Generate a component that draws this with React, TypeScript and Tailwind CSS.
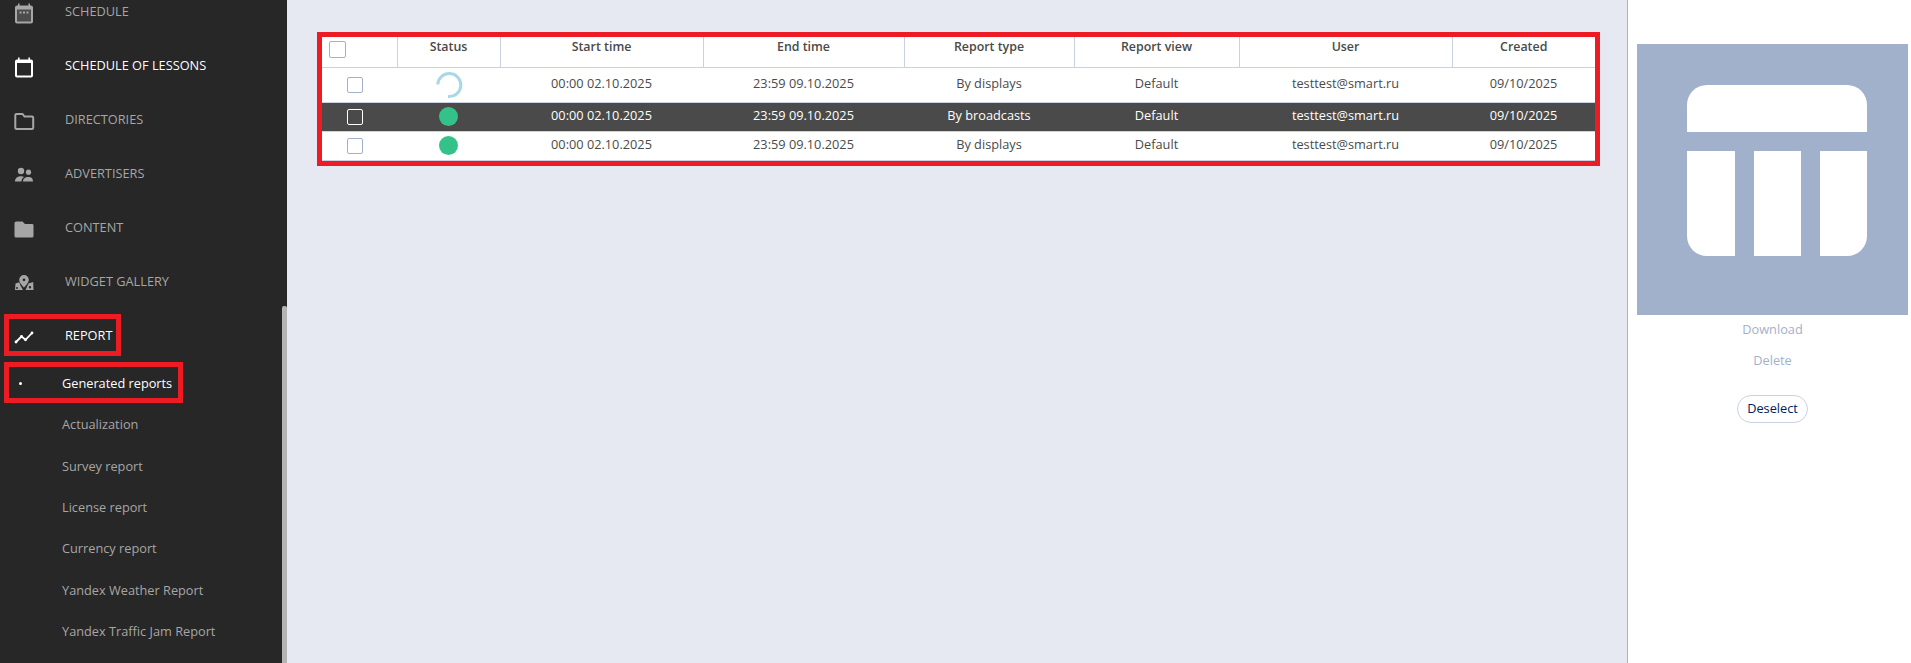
import React from "react";

const font = { fontFamily: '"Open Sans", sans-serif' };

const CalendarDots = () => (
  <svg width="24" height="24" viewBox="0 0 24 24" className="text-[#a6a6a6]">
    <rect x="4" y="8" width="16" height="13.500" fill="#4c4c4c" />
    <path fill="currentColor" fillRule="evenodd" d="M6 2.500h1.600v2h8.800v-2H18v2h1A2 2 0 0 1 21 6.500v14a2 2 0 0 1-2 2H5a2 2 0 0 1-2-2v-14a2 2 0 0 1 2-2h1zM5 8.500v12h14v-12z" />
    <rect x="7.500" y="10.500" width="2" height="2" fill="currentColor" />
    <rect x="11" y="10.500" width="2" height="2" fill="currentColor" />
    <rect x="14.500" y="10.500" width="2" height="2" fill="currentColor" />
  </svg>
);
const CalendarOutline = () => (
  <svg width="24" height="24" viewBox="0 0 24 24" className="text-white">
    <path fill="currentColor" fillRule="evenodd" d="M6 2.500h1.600v2h8.800v-2H18v2h1A2 2 0 0 1 21 6.500v14a2 2 0 0 1-2 2H5a2 2 0 0 1-2-2v-14a2 2 0 0 1 2-2h1zM5 8v12.500h14V8z" />
  </svg>
);
const FolderOutline = () => (
  <svg width="24" height="24" viewBox="0 0 24 24" className="text-[#a6a6a6]">
    <path fill="none" stroke="currentColor" strokeWidth="2" d="M4.500 5h6l2 2.500h7.500a1.200 1.200 0 0 1 1.200 1.200v10.100a1.200 1.200 0 0 1-1.200 1.200H4.500a1.200 1.200 0 0 1-1.200-1.200V6.200A1.200 1.200 0 0 1 4.500 5z" />
  </svg>
);
const People = () => (
  <svg width="24" height="24" viewBox="0 0 24 24" className="text-[#a6a6a6]">
    <circle cx="9" cy="8" r="3.200" fill="currentColor" />
    <circle cx="16.500" cy="9.200" r="2.600" fill="currentColor" />
    <path fill="currentColor" d="M3 18.500c0-3.400 2.800-5.200 6-5.200 1.200 0 2.200.2 3.100.7-1.700 1-2.600 2.500-2.600 4.500z" />
    <path fill="currentColor" d="M11 18.500c0-3 2.600-4.400 5.500-4.400S21 15.500 21 18.500z" />
  </svg>
);
const FolderFilled = () => (
  <svg width="24" height="24" viewBox="0 0 24 24" className="text-[#a6a6a6]">
    <path fill="currentColor" d="M4 4.500h6.500l2.500 2.500h7.500A1.500 1.500 0 0 1 21.500 8.500v10.500a1.500 1.500 0 0 1-1.500 1.500H4A1.500 1.500 0 0 1 2.500 19V6A1.500 1.500 0 0 1 4 4.500z" />
  </svg>
);
const MapPin = () => (
  <svg width="24" height="24" viewBox="0 0 24 24" className="text-[#a6a6a6]">
    <path fill="currentColor" fillRule="evenodd" d="M3.500 12.500l3.800-1.200 1 3 2.700 4.700H3zM5 16a1 1 0 1 0 0 2 1 1 0 0 0 0-2z" />
    <path fill="currentColor" fillRule="evenodd" d="M16.500 12.500l4.700-1.500.3 8h-8zM18 15a1.200 1.200 0 1 0 0 2.400 1.200 1.200 0 0 0 0-2.400z" />
    <path fill="currentColor" fillRule="evenodd" d="M12 4a4.800 4.800 0 0 1 4.800 4.800c0 2.900-3 5.900-4.800 7.900-1.800-2-4.800-5-4.800-7.900A4.800 4.800 0 0 1 12 4zm0 3.400a1.400 1.400 0 1 0 0 2.800 1.400 1.400 0 0 0 0-2.800z" />
  </svg>
);
const Trend = () => (
  <svg width="24" height="24" viewBox="0 0 24 24" className="text-white">
    <path fill="none" stroke="currentColor" strokeWidth="1.800" strokeLinejoin="round" d="M4 17l5.500-5.500 4 3.300L20 8" />
    <circle cx="4" cy="17" r="1.400" fill="currentColor" />
    <circle cx="9.500" cy="11.500" r="1.400" fill="currentColor" />
    <circle cx="13.500" cy="14.800" r="1.400" fill="currentColor" />
    <circle cx="20" cy="8" r="1.400" fill="currentColor" />
  </svg>
);

const navItems = [
  { label: "SCHEDULE", Icon: CalendarDots },
  { label: "SCHEDULE OF LESSONS", Icon: CalendarOutline, active: true },
  { label: "DIRECTORIES", Icon: FolderOutline },
  { label: "ADVERTISERS", Icon: People },
  { label: "CONTENT", Icon: FolderFilled },
  { label: "WIDGET GALLERY", Icon: MapPin },
];

const subItems = [
  "Actualization",
  "Survey report",
  "License report",
  "Currency report",
  "Yandex Weather Report",
  "Yandex Traffic Jam Report",
];

const rows = [
  { status: "loading", type: "By displays" },
  { status: "done", type: "By broadcasts", selected: true },
  { status: "done", type: "By displays" },
];

const heads = ["Status", "Start time", "End time", "Report type", "Report view", "User", "Created"];

function Sidebar() {
  return (
    <aside className="relative w-[287px] shrink-0 overflow-hidden bg-[#272727]">
      <ul className="-mt-[15px]">
        {navItems.map(({ label, Icon, active }) => (
          <li key={label} className="flex h-[54px] items-center">
            <span className="ml-[12px] mt-[1px] w-[53px] shrink-0">
              <Icon />
            </span>
            <span className={`text-[12.75px] ${active ? "text-white" : "text-[#a6a6a6]"}`}>{label}</span>
          </li>
        ))}
        <li className="relative flex h-[54px] items-center">
          <span className="ml-[12px] mt-[1px] w-[53px] shrink-0">
            <Trend />
          </span>
          <span className="text-[12.75px] text-white">REPORT</span>
          <span className="absolute left-[4px] top-[5px] h-[42px] w-[117px] border-[5px] border-[#ed1c24]" />
        </li>
        <li className="relative flex h-[41px] items-center">
          <span className="ml-[19px] h-[3px] w-[3px] rounded-full bg-white" />
          <span className="ml-[40px] text-[12.75px] text-white">Generated reports</span>
          <span className="absolute -top-px left-[4px] h-[41px] w-[179px] border-[5px] border-[#ed1c24]" />
        </li>
        {subItems.map((s) => (
          <li key={s} className="flex h-[41.4px] items-center pl-[62px] text-[12.75px] text-[#a6a6a6]">
            {s}
          </li>
        ))}
      </ul>
      <div className="absolute bottom-0 right-0 top-[306px] w-[5px] rounded-t-[2px] bg-[#b4b4b4]" />
    </aside>
  );
}

function Check({ dark }: { dark?: boolean }) {
  return (
    <span className={`ml-[25px] block h-[16px] w-[16px] rounded-[2px] border ${dark ? "border-white" : "border-[#a2b1cb]"}`} />
  );
}

function Status({ kind }: { kind: string }) {
  if (kind === "loading") {
    return (
      <svg width="28" height="28" viewBox="0 0 28 28" className="mx-auto block">
        <path d="M2.800 13.500A11.500 11.500 0 1 1 13 25.500" fill="none" stroke="#a8d8e8" strokeWidth="3" />
      </svg>
    );
  }
  return <span className="mx-auto block h-[19px] w-[19px] rounded-full bg-[#34c28a]" />;
}

function ReportsTable() {
  return (
    <div className="border-[5px] border-[#ed1c24]">
      <table className="w-[1273px] table-fixed border-collapse bg-white text-[12.75px] text-[#4a4a4a]">
        <colgroup>
          <col className="w-[75px]" />
          <col className="w-[103px]" />
          <col className="w-[203px]" />
          <col className="w-[201px]" />
          <col className="w-[170px]" />
          <col className="w-[165px]" />
          <col className="w-[213px]" />
          <col className="w-[143px]" />
        </colgroup>
        <thead>
          <tr className="h-[30px] border-b border-[#c9d2e4]">
            <th className="border-r border-[#c9d2e4] pb-[4px] pl-[7px] text-left align-middle">
              <span className="block h-[17px] w-[17px] rounded-[2px] border border-[#a2b1cb]" />
            </th>
            {heads.map((h) => (
              <th key={h} className="border-r border-[#c9d2e4] pb-[11px] text-center align-middle text-[12.4px] font-semibold leading-[17px] last:border-r-0">
                {h}
              </th>
            ))}
          </tr>
        </thead>
        <tbody>
          {rows.map((r, i) => (
            <tr
              key={i}
              className={`${i === 0 ? "h-[35px]" : "h-[29px]"} border-b ${r.selected ? "border-[#c9d2e4] bg-[#4a4a4a] text-white" : "border-[#c9d2e4]"}`}
            >
              <td className="align-middle">
                <Check dark={r.selected} />
              </td>
              <td className="align-middle">
                <Status kind={r.status} />
              </td>
              <td className="pb-[2px] text-center align-middle">00:00 02.10.2025</td>
              <td className="pb-[2px] text-center align-middle">23:59 09.10.2025</td>
              <td className="pb-[2px] text-center align-middle">{r.type}</td>
              <td className="pb-[2px] text-center align-middle">Default</td>
              <td className="pb-[2px] text-center align-middle">testtest@smart.ru</td>
              <td className="pb-[2px] text-center align-middle">09/10/2025</td>
            </tr>
          ))}
        </tbody>
      </table>
    </div>
  );
}

function DetailPanel() {
  return (
    <aside className="w-[284px] shrink-0 border-l border-[#a4b2cc] bg-white pl-[9px] pr-[3px] pt-[44px]">
      <div className="flex h-[271px] w-[271px] items-center justify-center bg-[#a2b1cb] pb-[18px] pl-[9px]">
        <svg width="180" height="171" viewBox="0 0 180 171" fill="#ffffff">
          <path d="M20 0h140a20 20 0 0 1 20 20v27H0V20A20 20 0 0 1 20 0z" />
          <path d="M0 66h48v105H20a20 20 0 0 1-20-20z" />
          <rect x="67" y="66" width="47" height="105" />
          <path d="M133 66h47v85a20 20 0 0 1-20 20h-27z" />
        </svg>
      </div>
      <div className="flex w-[271px] flex-col items-center text-[12.75px] text-[#a2b1cb]">
        <span className="mt-[5px] flex h-[20px] items-center">Download</span>
        <span className="mt-[11px] flex h-[20px] items-center">Delete</span>
        <button className="mt-[24px] h-[28px] w-[71px] rounded-full border border-[#c9d2e4] bg-white text-[#00205c]">
          Deselect
        </button>
      </div>
    </aside>
  );
}

export default function App() {
  return (
    <div className="flex h-screen overflow-hidden" style={font}>
      <Sidebar />
      <main className="min-w-0 flex-1 bg-[#e6e9f2] pl-[30px] pr-[27px] pt-[32px]">
        <ReportsTable />
      </main>
      <DetailPanel />
    </div>
  );
}
